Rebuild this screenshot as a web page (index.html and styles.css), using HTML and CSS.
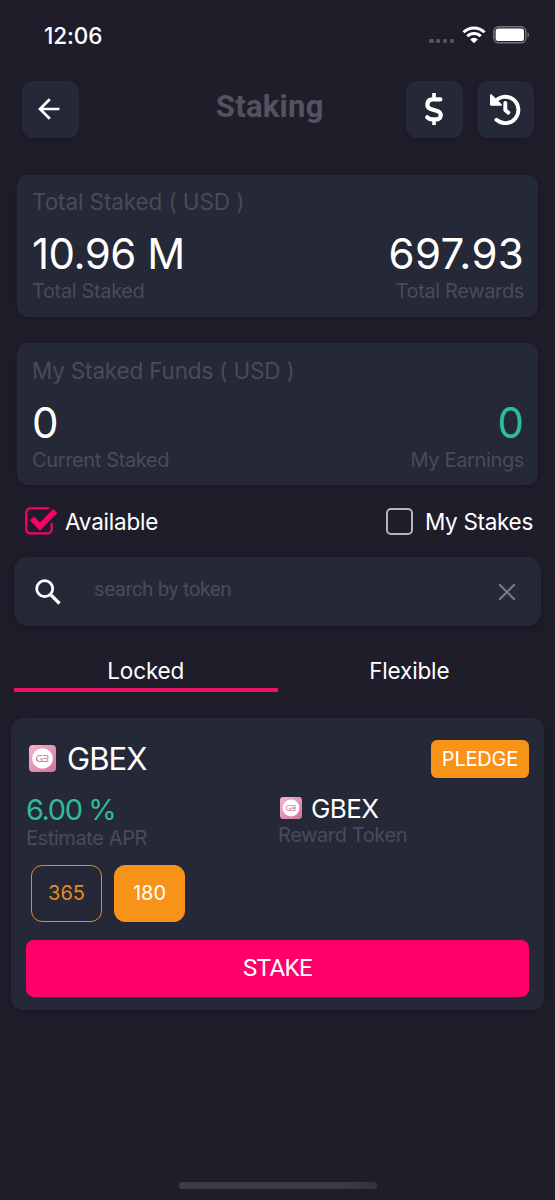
FILE: index.html
```html
<!DOCTYPE html>
<html lang="en">
<head>
<meta charset="utf-8">
<title>Staking</title>
<link rel="stylesheet" href="styles.css">
</head>
<body>
<svg width="0" height="0" class="defs">
  <defs>
    <linearGradient id="pink" x1="0" y1="0" x2="1" y2="1"><stop offset="0" stop-color="#f3b6cb"/><stop offset="1" stop-color="#cf7496"/></linearGradient>
    <symbol id="token" viewBox="0 0 27 27">
      <rect width="27" height="27" rx="4" fill="url(#pink)"/>
      <circle cx="13.5" cy="13.5" r="10.3" fill="#fff"/>
      <path d="M13 10.5H10.5a3 3 0 0 0 0 6H13V14h-2M14 10.5h3.5a1.5 1.5 0 0 1 0 3H14.5h3a1.5 1.5 0 0 1 0 3H14" fill="none" stroke="#d5819f" stroke-width="1.2"/>
    </symbol>
  </defs>
</svg>
<div class="screen">
  <div class="status">
    <span class="time">12:06</span>
    <div class="signals">
      <span class="dots"><i></i><i></i><i></i><i></i></span>
      <svg class="wifi" width="24" height="18" viewBox="0 0 24 18"><g fill="none" stroke="#fff" stroke-width="3"><path d="M1.5 6.2a15 15 0 0 1 21 0"/><path d="M5.3 10.3a9.6 9.6 0 0 1 13.4 0"/></g><path d="M8.2 13.4a5.4 5.4 0 0 1 7.6 0L12 17.3z" fill="#fff"/></svg>
      <svg class="battery" width="37" height="18" viewBox="0 0 37 18"><rect x=".8" y=".8" width="32" height="16" rx="4.8" fill="none" stroke="#74717c" stroke-width="1.5"/><rect x="2.6" y="2.6" width="28.4" height="12.4" rx="2.8" fill="#fff"/><path d="M34.5 6.2c2 .8 2 4.6 0 5.4z" fill="#74717c"/></svg>
    </div>
  </div>

  <header class="header">
    <button class="tile"><svg width="24" height="24" viewBox="0 0 24 24"><path d="M22.4 12H3M12.8 2.2 3 12l9.8 9.8" fill="none" stroke="#fff" stroke-width="2.7"/></svg></button>
    <h1 class="title">Staking</h1>
    <div class="actions">
      <button class="tile"><svg width="20" height="34" viewBox="0 0 20 34"><path d="M10 1v5.5M10 27v6" stroke="#fff" stroke-width="3.6"/><path d="M16.4 7.4H8.2a5 5 0 0 0-1.5 9.7l6.5 2a4.2 4.2 0 0 1-1.3 8.3H8.5a7 7 0 0 1-5.3-2.2" fill="none" stroke="#fff" stroke-width="4.2" stroke-linejoin="round" stroke-linecap="round"/></svg></button>
      <button class="tile"><svg width="32" height="32" viewBox="0 0 32 32"><path d="M5.6 9A13.2 13.2 0 1 1 7.4 26.8" fill="none" stroke="#fff" stroke-width="3.9" stroke-linecap="round"/><path d="M1 2.2c0-1 1-1.3 1.7-.6l10 9.7c.7.7.3 1.5-.6 1.5H2.2c-.8 0-1.2-.5-1.2-1.2z" fill="#fff"/><path d="M16.3 10v7.3l3 2.3" fill="none" stroke="#fff" stroke-width="3.9" stroke-linecap="round" stroke-linejoin="round"/></svg></button>
    </div>
  </header>

  <section class="card">
    <h2 class="card-title">Total Staked ( USD )</h2>
    <div class="row figures"><span class="total">10.96 M</span><span class="rewards">697.93</span></div>
    <div class="row labels"><span>Total Staked</span><span>Total Rewards</span></div>
  </section>

  <section class="card">
    <h2 class="card-title funds">My Staked Funds ( USD )</h2>
    <div class="row figures"><span>0</span><span class="green">0</span></div>
    <div class="row labels"><span>Current Staked</span><span>My Earnings</span></div>
  </section>

  <div class="filters">
    <span class="check"><svg width="33" height="28" viewBox="0 0 33 28"><path d="M24 1.2H5.5A4.2 4.2 0 0 0 1.2 5.4v16.7a4.2 4.2 0 0 0 4.3 4.3h17a4.2 4.2 0 0 0 4.2-4.3V16" fill="none" stroke="#ff006b" stroke-width="2.1"/><path d="m7 11.5 8 8L30.3 4" fill="none" stroke="#ff006b" stroke-width="5.6"/></svg><span class="available">Available</span></span>
    <span class="check"><i class="box"></i><span class="mystakes">My Stakes</span></span>
  </div>

  <div class="search">
    <svg width="26" height="26" viewBox="0 0 26 26"><circle cx="9.7" cy="9.7" r="8" fill="none" stroke="#fff" stroke-width="2.8"/><path d="m15.5 15.5 9 9" stroke="#fff" stroke-width="3.2"/></svg>
    <span class="placeholder">search by token</span>
    <svg width="18" height="18" viewBox="0 0 18 18"><path d="m1.2 1.2 15.6 15.6M16.8 1.2 1.2 16.8" stroke="#777985" stroke-width="2.1"/></svg>
  </div>

  <nav class="tabs"><span class="tab active">Locked</span><span class="tab">Flexible</span></nav>

  <section class="pool">
    <div class="pool-head">
      <svg width="27" height="27"><use href="#token"/></svg>
      <span class="pool-name">GBEX</span>
      <span class="pledge">PLEDGE</span>
    </div>
    <div class="pool-info">
      <div class="apr"><div class="apr-value">6.00 %</div><div class="muted">Estimate APR</div></div>
      <div class="reward"><div class="reward-value"><svg width="22" height="22"><use href="#token"/></svg><span>GBEX</span></div><div class="muted">Reward Token</div></div>
    </div>
    <div class="terms"><span class="term">365</span><span class="term selected">180</span></div>
    <button class="stake">STAKE</button>
  </section>

  <div class="home"></div>
</div>
</body>
</html>
```
FILE: styles.css
```css
* { box-sizing: border-box; }
body { margin: 0; background: #201d2b; color: #fff; font-family: Inter, "Liberation Sans", sans-serif; }
h1, h2 { margin: 0; font-weight: 400; }
button { border: 0; padding: 0; color: inherit; }
svg { display: block; flex: none; }
span { white-space: nowrap; }
.defs { position: absolute; }
.screen { width: 555px; height: 1200px; display: flex; flex-direction: column; overflow: hidden; }

.status { height: 81px; padding: 22px 25px 0 44px; display: flex; justify-content: space-between; align-items: flex-start; }
.time { font-size: 22.5px; line-height: 27px; font-weight: 550; letter-spacing: -.1px; }
.signals { display: flex; padding-top: 4px; }
.dots { display: flex; gap: 2.6px; padding-top: 13px; margin-right: 8px; }
.dots i { width: 4.2px; height: 4.2px; border-radius: 1.2px; background: #56535f; }
.battery { margin-left: 7px; }

.header { height: 57px; padding: 0 21px 0 21.5px; display: grid; grid-template-columns: 128px 1fr 128px; justify-items: start; }
.tile { width: 57px; height: 57px; padding: 0 2px 2px 0; border-radius: 11px; background: #252836; display: grid; place-items: center; box-shadow: 0 1px 5px rgba(20, 18, 30, .45); }
.title { justify-self: center; margin: 6px 16px 0 0; font: 700 31px/40px Roboto, sans-serif; letter-spacing: .25px; color: #55525f; }
.actions { display: flex; gap: 14px; }

.card { margin: 37px 17px 0; height: 142px; padding: 13px 14px 0 15px; border-radius: 11px; background: #252836; box-shadow: 0 1px 6px rgba(20, 18, 30, .5); }
.card + .card { margin-top: 26px; padding-top: 14px; }
.card-title { font-size: 22.5px; line-height: 27px; letter-spacing: -.1px; color: #4c4a58; }
.funds { letter-spacing: -.18px; }
.row { display: flex; justify-content: space-between; }
.figures { margin-top: 14px; font-size: 42px; line-height: 50px; }
.total { letter-spacing: -.5px; }
.rewards { letter-spacing: .3px; }
.labels { font-size: 20px; line-height: 24px; letter-spacing: -.36px; color: #4c4a58; }
.green { color: #2fbc9a; }

.filters { height: 72px; padding: 0 22px 0 25px; display: flex; justify-content: space-between; align-items: center; font-size: 22.5px; }
.check { display: flex; align-items: center; gap: 7px; }
.available { letter-spacing: -.2px; }
.mystakes { letter-spacing: -.3px; }
.box { width: 27px; height: 27px; margin-right: 5px; border: 2.3px solid #b7b5bc; border-radius: 5px; }

.search { height: 69px; margin: 0 14px; padding: 0 25px 0 21px; border-radius: 14px; background: #252836; display: flex; align-items: center; box-shadow: 0 3px 9px rgba(18, 16, 28, .55); }
.placeholder { flex: 1; margin: -5px 0 0 33px; font: 400 20.5px/26px Roboto, sans-serif; letter-spacing: -.4px; color: #4c4a58; }

.tabs { display: flex; height: 66px; margin: 0 14px; padding-top: 27px; }
.tab { width: 50%; height: 39px; line-height: 36px; text-align: center; font-size: 22.5px; letter-spacing: -.15px; }
.active { border-bottom: 4px solid #ec1268; }

.pool { margin: 26px 11px 0; height: 292px; padding: 21px 15px 14px; border-radius: 12px; background: #252836; box-shadow: 0 1px 6px rgba(20, 18, 30, .5); }
.pool-head { display: flex; align-items: center; height: 39px; padding-left: 3px; }
.pool-name { margin-left: 11px; font-size: 31px; line-height: 39px; letter-spacing: -.9px; }
.pledge { width: 98px; height: 38px; margin-left: auto; border-radius: 6px; background: #f89319; font-size: 20px; line-height: 38px; letter-spacing: -.2px; text-align: center; }
.pool-info { display: grid; grid-template-columns: 252px 1fr; height: 87px; }
.apr { padding-top: 16px; }
.apr-value { font-size: 29px; line-height: 32px; letter-spacing: -1.4px; color: #2fbc9a; }
.muted { font-size: 20px; line-height: 24px; letter-spacing: -.4px; color: #4c4a58; }
.reward { padding-top: 15px; }
.reward-value { display: flex; align-items: center; gap: 9px; height: 30px; padding-left: 2px; font-size: 26px; letter-spacing: -.6px; }
.terms { display: flex; gap: 12px; padding-left: 5px; height: 75px; }
.term { width: 71px; height: 57px; border: 1.5px solid #e68c22; border-radius: 11px; font-size: 20px; line-height: 54px; text-align: center; color: #e68c22; }
.selected { background: #f89319; border-color: #f89319; color: #fff; }
.stake { display: block; width: 100%; height: 57px; border-radius: 8px; background: #ff006b; font: 400 24px/57px Roboto, sans-serif; letter-spacing: -.6px; }

.home { width: 198px; height: 7px; margin: auto auto 11px 179px; border-radius: 4px; background: linear-gradient(90deg, #3e3c42 80%, #33313b); }
```
